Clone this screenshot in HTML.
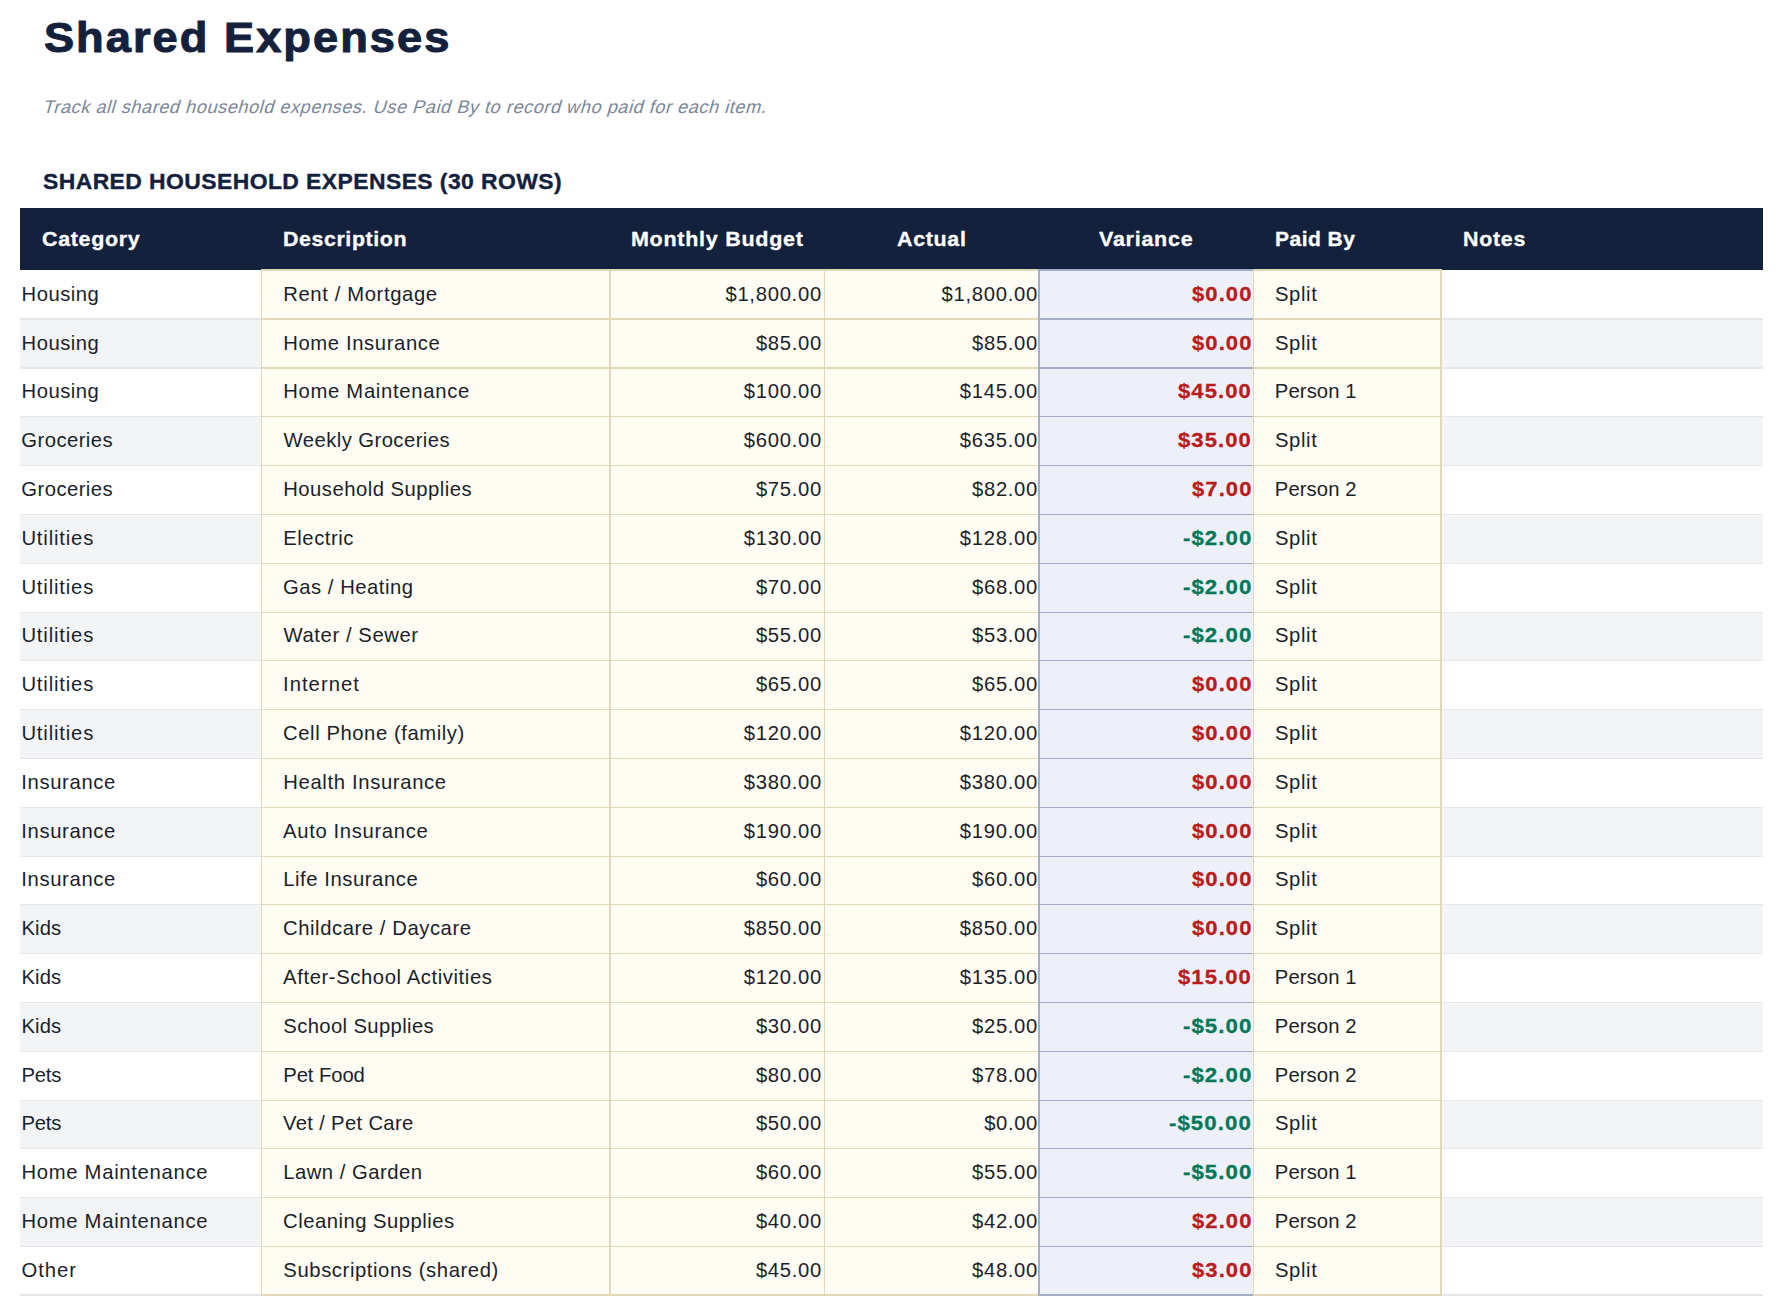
<!DOCTYPE html>
<html><head><meta charset="utf-8"><title>Shared Expenses</title>
<style>
html,body{margin:0;padding:0;background:#ffffff;}
body{width:1783px;height:1316px;position:relative;overflow:hidden;font-family:"Liberation Sans", sans-serif;}
body div{position:absolute;}
.t{white-space:nowrap;}
</style></head><body>
<div style="left:20px;top:208px;width:1743px;height:62px;background:#14213d"></div><div style="left:20px;top:270px;width:241px;height:49px;background:#ffffff"></div><div style="left:1441px;top:270px;width:322px;height:49px;background:#ffffff"></div><div style="left:261px;top:270px;width:349px;height:49px;background:#fffcf3"></div><div style="left:610px;top:270px;width:214px;height:49px;background:#fffcf3"></div><div style="left:824px;top:270px;width:215px;height:49px;background:#fffcf3"></div><div style="left:1253px;top:270px;width:188px;height:49px;background:#fffcf3"></div><div style="left:1039px;top:270px;width:214px;height:49px;background:#edf0f8"></div><div style="left:20px;top:319px;width:241px;height:49px;background:#f3f4f6"></div><div style="left:1441px;top:319px;width:322px;height:49px;background:#f3f4f6"></div><div style="left:261px;top:319px;width:349px;height:49px;background:#fffcf3"></div><div style="left:610px;top:319px;width:214px;height:49px;background:#fffcf3"></div><div style="left:824px;top:319px;width:215px;height:49px;background:#fffcf3"></div><div style="left:1253px;top:319px;width:188px;height:49px;background:#fffcf3"></div><div style="left:1039px;top:319px;width:214px;height:49px;background:#edf0f8"></div><div style="left:20px;top:368px;width:241px;height:48px;background:#ffffff"></div><div style="left:1441px;top:368px;width:322px;height:48px;background:#ffffff"></div><div style="left:261px;top:368px;width:349px;height:48px;background:#fffcf3"></div><div style="left:610px;top:368px;width:214px;height:48px;background:#fffcf3"></div><div style="left:824px;top:368px;width:215px;height:48px;background:#fffcf3"></div><div style="left:1253px;top:368px;width:188px;height:48px;background:#fffcf3"></div><div style="left:1039px;top:368px;width:214px;height:48px;background:#edf0f8"></div><div style="left:20px;top:416px;width:241px;height:49px;background:#f3f4f6"></div><div style="left:1441px;top:416px;width:322px;height:49px;background:#f3f4f6"></div><div style="left:261px;top:416px;width:349px;height:49px;background:#fffcf3"></div><div style="left:610px;top:416px;width:214px;height:49px;background:#fffcf3"></div><div style="left:824px;top:416px;width:215px;height:49px;background:#fffcf3"></div><div style="left:1253px;top:416px;width:188px;height:49px;background:#fffcf3"></div><div style="left:1039px;top:416px;width:214px;height:49px;background:#edf0f8"></div><div style="left:20px;top:465px;width:241px;height:49px;background:#ffffff"></div><div style="left:1441px;top:465px;width:322px;height:49px;background:#ffffff"></div><div style="left:261px;top:465px;width:349px;height:49px;background:#fffcf3"></div><div style="left:610px;top:465px;width:214px;height:49px;background:#fffcf3"></div><div style="left:824px;top:465px;width:215px;height:49px;background:#fffcf3"></div><div style="left:1253px;top:465px;width:188px;height:49px;background:#fffcf3"></div><div style="left:1039px;top:465px;width:214px;height:49px;background:#edf0f8"></div><div style="left:20px;top:514px;width:241px;height:49px;background:#f3f4f6"></div><div style="left:1441px;top:514px;width:322px;height:49px;background:#f3f4f6"></div><div style="left:261px;top:514px;width:349px;height:49px;background:#fffcf3"></div><div style="left:610px;top:514px;width:214px;height:49px;background:#fffcf3"></div><div style="left:824px;top:514px;width:215px;height:49px;background:#fffcf3"></div><div style="left:1253px;top:514px;width:188px;height:49px;background:#fffcf3"></div><div style="left:1039px;top:514px;width:214px;height:49px;background:#edf0f8"></div><div style="left:20px;top:563px;width:241px;height:49px;background:#ffffff"></div><div style="left:1441px;top:563px;width:322px;height:49px;background:#ffffff"></div><div style="left:261px;top:563px;width:349px;height:49px;background:#fffcf3"></div><div style="left:610px;top:563px;width:214px;height:49px;background:#fffcf3"></div><div style="left:824px;top:563px;width:215px;height:49px;background:#fffcf3"></div><div style="left:1253px;top:563px;width:188px;height:49px;background:#fffcf3"></div><div style="left:1039px;top:563px;width:214px;height:49px;background:#edf0f8"></div><div style="left:20px;top:612px;width:241px;height:48px;background:#f3f4f6"></div><div style="left:1441px;top:612px;width:322px;height:48px;background:#f3f4f6"></div><div style="left:261px;top:612px;width:349px;height:48px;background:#fffcf3"></div><div style="left:610px;top:612px;width:214px;height:48px;background:#fffcf3"></div><div style="left:824px;top:612px;width:215px;height:48px;background:#fffcf3"></div><div style="left:1253px;top:612px;width:188px;height:48px;background:#fffcf3"></div><div style="left:1039px;top:612px;width:214px;height:48px;background:#edf0f8"></div><div style="left:20px;top:660px;width:241px;height:49px;background:#ffffff"></div><div style="left:1441px;top:660px;width:322px;height:49px;background:#ffffff"></div><div style="left:261px;top:660px;width:349px;height:49px;background:#fffcf3"></div><div style="left:610px;top:660px;width:214px;height:49px;background:#fffcf3"></div><div style="left:824px;top:660px;width:215px;height:49px;background:#fffcf3"></div><div style="left:1253px;top:660px;width:188px;height:49px;background:#fffcf3"></div><div style="left:1039px;top:660px;width:214px;height:49px;background:#edf0f8"></div><div style="left:20px;top:709px;width:241px;height:49px;background:#f3f4f6"></div><div style="left:1441px;top:709px;width:322px;height:49px;background:#f3f4f6"></div><div style="left:261px;top:709px;width:349px;height:49px;background:#fffcf3"></div><div style="left:610px;top:709px;width:214px;height:49px;background:#fffcf3"></div><div style="left:824px;top:709px;width:215px;height:49px;background:#fffcf3"></div><div style="left:1253px;top:709px;width:188px;height:49px;background:#fffcf3"></div><div style="left:1039px;top:709px;width:214px;height:49px;background:#edf0f8"></div><div style="left:20px;top:758px;width:241px;height:49px;background:#ffffff"></div><div style="left:1441px;top:758px;width:322px;height:49px;background:#ffffff"></div><div style="left:261px;top:758px;width:349px;height:49px;background:#fffcf3"></div><div style="left:610px;top:758px;width:214px;height:49px;background:#fffcf3"></div><div style="left:824px;top:758px;width:215px;height:49px;background:#fffcf3"></div><div style="left:1253px;top:758px;width:188px;height:49px;background:#fffcf3"></div><div style="left:1039px;top:758px;width:214px;height:49px;background:#edf0f8"></div><div style="left:20px;top:807px;width:241px;height:49px;background:#f3f4f6"></div><div style="left:1441px;top:807px;width:322px;height:49px;background:#f3f4f6"></div><div style="left:261px;top:807px;width:349px;height:49px;background:#fffcf3"></div><div style="left:610px;top:807px;width:214px;height:49px;background:#fffcf3"></div><div style="left:824px;top:807px;width:215px;height:49px;background:#fffcf3"></div><div style="left:1253px;top:807px;width:188px;height:49px;background:#fffcf3"></div><div style="left:1039px;top:807px;width:214px;height:49px;background:#edf0f8"></div><div style="left:20px;top:856px;width:241px;height:48px;background:#ffffff"></div><div style="left:1441px;top:856px;width:322px;height:48px;background:#ffffff"></div><div style="left:261px;top:856px;width:349px;height:48px;background:#fffcf3"></div><div style="left:610px;top:856px;width:214px;height:48px;background:#fffcf3"></div><div style="left:824px;top:856px;width:215px;height:48px;background:#fffcf3"></div><div style="left:1253px;top:856px;width:188px;height:48px;background:#fffcf3"></div><div style="left:1039px;top:856px;width:214px;height:48px;background:#edf0f8"></div><div style="left:20px;top:904px;width:241px;height:49px;background:#f3f4f6"></div><div style="left:1441px;top:904px;width:322px;height:49px;background:#f3f4f6"></div><div style="left:261px;top:904px;width:349px;height:49px;background:#fffcf3"></div><div style="left:610px;top:904px;width:214px;height:49px;background:#fffcf3"></div><div style="left:824px;top:904px;width:215px;height:49px;background:#fffcf3"></div><div style="left:1253px;top:904px;width:188px;height:49px;background:#fffcf3"></div><div style="left:1039px;top:904px;width:214px;height:49px;background:#edf0f8"></div><div style="left:20px;top:953px;width:241px;height:49px;background:#ffffff"></div><div style="left:1441px;top:953px;width:322px;height:49px;background:#ffffff"></div><div style="left:261px;top:953px;width:349px;height:49px;background:#fffcf3"></div><div style="left:610px;top:953px;width:214px;height:49px;background:#fffcf3"></div><div style="left:824px;top:953px;width:215px;height:49px;background:#fffcf3"></div><div style="left:1253px;top:953px;width:188px;height:49px;background:#fffcf3"></div><div style="left:1039px;top:953px;width:214px;height:49px;background:#edf0f8"></div><div style="left:20px;top:1002px;width:241px;height:49px;background:#f3f4f6"></div><div style="left:1441px;top:1002px;width:322px;height:49px;background:#f3f4f6"></div><div style="left:261px;top:1002px;width:349px;height:49px;background:#fffcf3"></div><div style="left:610px;top:1002px;width:214px;height:49px;background:#fffcf3"></div><div style="left:824px;top:1002px;width:215px;height:49px;background:#fffcf3"></div><div style="left:1253px;top:1002px;width:188px;height:49px;background:#fffcf3"></div><div style="left:1039px;top:1002px;width:214px;height:49px;background:#edf0f8"></div><div style="left:20px;top:1051px;width:241px;height:49px;background:#ffffff"></div><div style="left:1441px;top:1051px;width:322px;height:49px;background:#ffffff"></div><div style="left:261px;top:1051px;width:349px;height:49px;background:#fffcf3"></div><div style="left:610px;top:1051px;width:214px;height:49px;background:#fffcf3"></div><div style="left:824px;top:1051px;width:215px;height:49px;background:#fffcf3"></div><div style="left:1253px;top:1051px;width:188px;height:49px;background:#fffcf3"></div><div style="left:1039px;top:1051px;width:214px;height:49px;background:#edf0f8"></div><div style="left:20px;top:1100px;width:241px;height:48px;background:#f3f4f6"></div><div style="left:1441px;top:1100px;width:322px;height:48px;background:#f3f4f6"></div><div style="left:261px;top:1100px;width:349px;height:48px;background:#fffcf3"></div><div style="left:610px;top:1100px;width:214px;height:48px;background:#fffcf3"></div><div style="left:824px;top:1100px;width:215px;height:48px;background:#fffcf3"></div><div style="left:1253px;top:1100px;width:188px;height:48px;background:#fffcf3"></div><div style="left:1039px;top:1100px;width:214px;height:48px;background:#edf0f8"></div><div style="left:20px;top:1148px;width:241px;height:49px;background:#ffffff"></div><div style="left:1441px;top:1148px;width:322px;height:49px;background:#ffffff"></div><div style="left:261px;top:1148px;width:349px;height:49px;background:#fffcf3"></div><div style="left:610px;top:1148px;width:214px;height:49px;background:#fffcf3"></div><div style="left:824px;top:1148px;width:215px;height:49px;background:#fffcf3"></div><div style="left:1253px;top:1148px;width:188px;height:49px;background:#fffcf3"></div><div style="left:1039px;top:1148px;width:214px;height:49px;background:#edf0f8"></div><div style="left:20px;top:1197px;width:241px;height:49px;background:#f3f4f6"></div><div style="left:1441px;top:1197px;width:322px;height:49px;background:#f3f4f6"></div><div style="left:261px;top:1197px;width:349px;height:49px;background:#fffcf3"></div><div style="left:610px;top:1197px;width:214px;height:49px;background:#fffcf3"></div><div style="left:824px;top:1197px;width:215px;height:49px;background:#fffcf3"></div><div style="left:1253px;top:1197px;width:188px;height:49px;background:#fffcf3"></div><div style="left:1039px;top:1197px;width:214px;height:49px;background:#edf0f8"></div><div style="left:20px;top:1246px;width:241px;height:49px;background:#ffffff"></div><div style="left:1441px;top:1246px;width:322px;height:49px;background:#ffffff"></div><div style="left:261px;top:1246px;width:349px;height:49px;background:#fffcf3"></div><div style="left:610px;top:1246px;width:214px;height:49px;background:#fffcf3"></div><div style="left:824px;top:1246px;width:215px;height:49px;background:#fffcf3"></div><div style="left:1253px;top:1246px;width:188px;height:49px;background:#fffcf3"></div><div style="left:1039px;top:1246px;width:214px;height:49px;background:#edf0f8"></div>
<div style="left:20px;top:318px;width:241px;height:2px;background:#e5e7eb"></div><div style="left:1441px;top:318px;width:322px;height:2px;background:#e5e7eb"></div><div style="left:20px;top:367px;width:241px;height:2px;background:#e5e7eb"></div><div style="left:1441px;top:367px;width:322px;height:2px;background:#e5e7eb"></div><div style="left:20px;top:416px;width:241px;height:1px;background:#e5e7eb"></div><div style="left:1441px;top:416px;width:322px;height:1px;background:#e5e7eb"></div><div style="left:20px;top:465px;width:241px;height:1px;background:#e5e7eb"></div><div style="left:1441px;top:465px;width:322px;height:1px;background:#e5e7eb"></div><div style="left:20px;top:514px;width:241px;height:1px;background:#e5e7eb"></div><div style="left:1441px;top:514px;width:322px;height:1px;background:#e5e7eb"></div><div style="left:20px;top:563px;width:241px;height:1px;background:#e5e7eb"></div><div style="left:1441px;top:563px;width:322px;height:1px;background:#e5e7eb"></div><div style="left:20px;top:612px;width:241px;height:1px;background:#e5e7eb"></div><div style="left:1441px;top:612px;width:322px;height:1px;background:#e5e7eb"></div><div style="left:20px;top:660px;width:241px;height:1px;background:#e5e7eb"></div><div style="left:1441px;top:660px;width:322px;height:1px;background:#e5e7eb"></div><div style="left:20px;top:709px;width:241px;height:1px;background:#e5e7eb"></div><div style="left:1441px;top:709px;width:322px;height:1px;background:#e5e7eb"></div><div style="left:20px;top:758px;width:241px;height:1px;background:#e5e7eb"></div><div style="left:1441px;top:758px;width:322px;height:1px;background:#e5e7eb"></div><div style="left:20px;top:807px;width:241px;height:1px;background:#e5e7eb"></div><div style="left:1441px;top:807px;width:322px;height:1px;background:#e5e7eb"></div><div style="left:20px;top:856px;width:241px;height:1px;background:#e5e7eb"></div><div style="left:1441px;top:856px;width:322px;height:1px;background:#e5e7eb"></div><div style="left:20px;top:904px;width:241px;height:1px;background:#e5e7eb"></div><div style="left:1441px;top:904px;width:322px;height:1px;background:#e5e7eb"></div><div style="left:20px;top:953px;width:241px;height:1px;background:#e5e7eb"></div><div style="left:1441px;top:953px;width:322px;height:1px;background:#e5e7eb"></div><div style="left:20px;top:1002px;width:241px;height:1px;background:#e5e7eb"></div><div style="left:1441px;top:1002px;width:322px;height:1px;background:#e5e7eb"></div><div style="left:20px;top:1051px;width:241px;height:1px;background:#e5e7eb"></div><div style="left:1441px;top:1051px;width:322px;height:1px;background:#e5e7eb"></div><div style="left:20px;top:1100px;width:241px;height:1px;background:#e5e7eb"></div><div style="left:1441px;top:1100px;width:322px;height:1px;background:#e5e7eb"></div><div style="left:20px;top:1148px;width:241px;height:1px;background:#e5e7eb"></div><div style="left:1441px;top:1148px;width:322px;height:1px;background:#e5e7eb"></div><div style="left:20px;top:1197px;width:241px;height:1px;background:#e5e7eb"></div><div style="left:1441px;top:1197px;width:322px;height:1px;background:#e5e7eb"></div><div style="left:20px;top:1246px;width:241px;height:1px;background:#e5e7eb"></div><div style="left:1441px;top:1246px;width:322px;height:1px;background:#e5e7eb"></div><div style="left:20px;top:1294px;width:241px;height:2px;background:#e5e7eb"></div><div style="left:1441px;top:1294px;width:322px;height:2px;background:#e5e7eb"></div><div style="left:261px;top:269px;width:349px;height:2px;background:#e2d8b8"></div><div style="left:610px;top:269px;width:429px;height:2px;background:#e2d8b8"></div><div style="left:1253px;top:269px;width:189px;height:2px;background:#e2d8b8"></div><div style="left:1039px;top:269px;width:214px;height:2px;background:#a3adc9"></div><div style="left:261px;top:318px;width:349px;height:2px;background:#e2d8b8"></div><div style="left:610px;top:318px;width:429px;height:2px;background:#e2d8b8"></div><div style="left:1253px;top:318px;width:189px;height:2px;background:#e2d8b8"></div><div style="left:1039px;top:318px;width:214px;height:2px;background:#a3adc9"></div><div style="left:261px;top:367px;width:349px;height:2px;background:#e2d8b8"></div><div style="left:610px;top:367px;width:429px;height:2px;background:#e2d8b8"></div><div style="left:1253px;top:367px;width:189px;height:2px;background:#e2d8b8"></div><div style="left:1039px;top:367px;width:214px;height:2px;background:#a3adc9"></div><div style="left:261px;top:416px;width:349px;height:1px;background:#e2d8b8"></div><div style="left:610px;top:416px;width:429px;height:1px;background:#e2d8b8"></div><div style="left:1253px;top:416px;width:189px;height:1px;background:#e2d8b8"></div><div style="left:1039px;top:416px;width:214px;height:1px;background:#a3adc9"></div><div style="left:261px;top:465px;width:349px;height:1px;background:#e2d8b8"></div><div style="left:610px;top:465px;width:429px;height:1px;background:#e2d8b8"></div><div style="left:1253px;top:465px;width:189px;height:1px;background:#e2d8b8"></div><div style="left:1039px;top:465px;width:214px;height:1px;background:#a3adc9"></div><div style="left:261px;top:514px;width:349px;height:1px;background:#e2d8b8"></div><div style="left:610px;top:514px;width:429px;height:1px;background:#e2d8b8"></div><div style="left:1253px;top:514px;width:189px;height:1px;background:#e2d8b8"></div><div style="left:1039px;top:514px;width:214px;height:1px;background:#a3adc9"></div><div style="left:261px;top:563px;width:349px;height:1px;background:#e2d8b8"></div><div style="left:610px;top:563px;width:429px;height:1px;background:#e2d8b8"></div><div style="left:1253px;top:563px;width:189px;height:1px;background:#e2d8b8"></div><div style="left:1039px;top:563px;width:214px;height:1px;background:#a3adc9"></div><div style="left:261px;top:612px;width:349px;height:1px;background:#e2d8b8"></div><div style="left:610px;top:612px;width:429px;height:1px;background:#e2d8b8"></div><div style="left:1253px;top:612px;width:189px;height:1px;background:#e2d8b8"></div><div style="left:1039px;top:612px;width:214px;height:1px;background:#a3adc9"></div><div style="left:261px;top:660px;width:349px;height:1px;background:#e2d8b8"></div><div style="left:610px;top:660px;width:429px;height:1px;background:#e2d8b8"></div><div style="left:1253px;top:660px;width:189px;height:1px;background:#e2d8b8"></div><div style="left:1039px;top:660px;width:214px;height:1px;background:#a3adc9"></div><div style="left:261px;top:709px;width:349px;height:1px;background:#e2d8b8"></div><div style="left:610px;top:709px;width:429px;height:1px;background:#e2d8b8"></div><div style="left:1253px;top:709px;width:189px;height:1px;background:#e2d8b8"></div><div style="left:1039px;top:709px;width:214px;height:1px;background:#a3adc9"></div><div style="left:261px;top:758px;width:349px;height:1px;background:#e2d8b8"></div><div style="left:610px;top:758px;width:429px;height:1px;background:#e2d8b8"></div><div style="left:1253px;top:758px;width:189px;height:1px;background:#e2d8b8"></div><div style="left:1039px;top:758px;width:214px;height:1px;background:#a3adc9"></div><div style="left:261px;top:807px;width:349px;height:1px;background:#e2d8b8"></div><div style="left:610px;top:807px;width:429px;height:1px;background:#e2d8b8"></div><div style="left:1253px;top:807px;width:189px;height:1px;background:#e2d8b8"></div><div style="left:1039px;top:807px;width:214px;height:1px;background:#a3adc9"></div><div style="left:261px;top:856px;width:349px;height:1px;background:#e2d8b8"></div><div style="left:610px;top:856px;width:429px;height:1px;background:#e2d8b8"></div><div style="left:1253px;top:856px;width:189px;height:1px;background:#e2d8b8"></div><div style="left:1039px;top:856px;width:214px;height:1px;background:#a3adc9"></div><div style="left:261px;top:904px;width:349px;height:1px;background:#e2d8b8"></div><div style="left:610px;top:904px;width:429px;height:1px;background:#e2d8b8"></div><div style="left:1253px;top:904px;width:189px;height:1px;background:#e2d8b8"></div><div style="left:1039px;top:904px;width:214px;height:1px;background:#a3adc9"></div><div style="left:261px;top:953px;width:349px;height:1px;background:#e2d8b8"></div><div style="left:610px;top:953px;width:429px;height:1px;background:#e2d8b8"></div><div style="left:1253px;top:953px;width:189px;height:1px;background:#e2d8b8"></div><div style="left:1039px;top:953px;width:214px;height:1px;background:#a3adc9"></div><div style="left:261px;top:1002px;width:349px;height:1px;background:#e2d8b8"></div><div style="left:610px;top:1002px;width:429px;height:1px;background:#e2d8b8"></div><div style="left:1253px;top:1002px;width:189px;height:1px;background:#e2d8b8"></div><div style="left:1039px;top:1002px;width:214px;height:1px;background:#a3adc9"></div><div style="left:261px;top:1051px;width:349px;height:1px;background:#e2d8b8"></div><div style="left:610px;top:1051px;width:429px;height:1px;background:#e2d8b8"></div><div style="left:1253px;top:1051px;width:189px;height:1px;background:#e2d8b8"></div><div style="left:1039px;top:1051px;width:214px;height:1px;background:#a3adc9"></div><div style="left:261px;top:1100px;width:349px;height:1px;background:#e2d8b8"></div><div style="left:610px;top:1100px;width:429px;height:1px;background:#e2d8b8"></div><div style="left:1253px;top:1100px;width:189px;height:1px;background:#e2d8b8"></div><div style="left:1039px;top:1100px;width:214px;height:1px;background:#a3adc9"></div><div style="left:261px;top:1148px;width:349px;height:1px;background:#e2d8b8"></div><div style="left:610px;top:1148px;width:429px;height:1px;background:#e2d8b8"></div><div style="left:1253px;top:1148px;width:189px;height:1px;background:#e2d8b8"></div><div style="left:1039px;top:1148px;width:214px;height:1px;background:#a3adc9"></div><div style="left:261px;top:1197px;width:349px;height:1px;background:#e2d8b8"></div><div style="left:610px;top:1197px;width:429px;height:1px;background:#e2d8b8"></div><div style="left:1253px;top:1197px;width:189px;height:1px;background:#e2d8b8"></div><div style="left:1039px;top:1197px;width:214px;height:1px;background:#a3adc9"></div><div style="left:261px;top:1246px;width:349px;height:1px;background:#e2d8b8"></div><div style="left:610px;top:1246px;width:429px;height:1px;background:#e2d8b8"></div><div style="left:1253px;top:1246px;width:189px;height:1px;background:#e2d8b8"></div><div style="left:1039px;top:1246px;width:214px;height:1px;background:#a3adc9"></div><div style="left:261px;top:1294px;width:349px;height:2px;background:#e2d8b8"></div><div style="left:610px;top:1294px;width:429px;height:2px;background:#e2d8b8"></div><div style="left:1253px;top:1294px;width:189px;height:2px;background:#e2d8b8"></div><div style="left:1039px;top:1294px;width:214px;height:2px;background:#a3adc9"></div><div style="left:261px;top:269px;width:1px;height:1027px;background:#e2d8b8"></div><div style="left:609px;top:269px;width:2px;height:1027px;background:#e2d8b8"></div><div style="left:824px;top:269px;width:1px;height:1027px;background:#e2d8b8"></div><div style="left:1440px;top:269px;width:2px;height:1027px;background:#e2d8b8"></div><div style="left:1253px;top:269px;width:1px;height:1027px;background:#e2d8b8"></div><div style="left:1038px;top:269px;width:2px;height:1027px;background:#a3adc9"></div>
<div class="t" style="left:44.03px;top:17.16px;font-size:41.818px;line-height:41.818px;color:#14213d;font-weight:bold;-webkit-text-stroke:1.0px #14213d;transform:scaleX(1.0821);transform-origin:1.20px 35.54px;letter-spacing:1.873px;">Shared Expenses</div><div class="t" style="left:41.74px;top:97.90px;font-size:18.230px;line-height:18.230px;color:#7b8698;transform:skewX(-16deg);transform-origin:0.41px 15.50px;letter-spacing:0.512px;">Track all shared household expenses. Use Paid By to record who paid for each item.</div><div class="t" style="left:43.07px;top:171.26px;font-size:22.282px;line-height:22.282px;color:#14213d;font-weight:bold;-webkit-text-stroke:0.35px #14213d;transform:scaleX(1.0294);transform-origin:0.64px 18.94px;letter-spacing:0.410px;">SHARED HOUSEHOLD EXPENSES (30 ROWS)</div><div class="t" style="left:41.63px;top:228.68px;font-size:20.256px;line-height:20.256px;color:#ffffff;font-weight:bold;-webkit-text-stroke:0.3px #ffffff;transform:scaleX(1.0574);transform-origin:0.83px 17.22px;letter-spacing:0.673px;">Category</div><div class="t" style="left:283.41px;top:228.68px;font-size:20.256px;line-height:20.256px;color:#ffffff;font-weight:bold;-webkit-text-stroke:0.3px #ffffff;transform:scaleX(1.0554);transform-origin:1.36px 17.22px;letter-spacing:0.571px;">Description</div><div class="t" style="left:631.42px;top:228.68px;font-size:20.256px;line-height:20.256px;color:#ffffff;font-weight:bold;-webkit-text-stroke:0.3px #ffffff;transform:scaleX(1.0624);transform-origin:1.36px 17.22px;letter-spacing:0.684px;">Monthly Budget</div><div class="t" style="left:897.04px;top:228.68px;font-size:20.256px;line-height:20.256px;color:#ffffff;font-weight:bold;-webkit-text-stroke:0.3px #ffffff;transform:scaleX(1.0578);transform-origin:0.50px 17.22px;letter-spacing:0.656px;">Actual</div><div class="t" style="left:1099.31px;top:228.68px;font-size:20.256px;line-height:20.256px;color:#ffffff;font-weight:bold;-webkit-text-stroke:0.3px #ffffff;transform:scaleX(1.0623);transform-origin:0.14px 17.22px;letter-spacing:0.691px;">Variance</div><div class="t" style="left:1275.21px;top:228.68px;font-size:20.256px;line-height:20.256px;color:#ffffff;font-weight:bold;-webkit-text-stroke:0.3px #ffffff;transform:scaleX(1.0391);transform-origin:1.36px 17.22px;letter-spacing:0.457px;">Paid By</div><div class="t" style="left:1463.01px;top:228.68px;font-size:20.256px;line-height:20.256px;color:#ffffff;font-weight:bold;-webkit-text-stroke:0.3px #ffffff;transform:scaleX(1.0565);transform-origin:1.36px 17.22px;letter-spacing:0.723px;">Notes</div><div class="t" style="left:21.52px;top:283.78px;font-size:20.256px;line-height:20.256px;color:#1a1f2b;letter-spacing:0.507px;">Housing</div><div class="t" style="left:283.22px;top:283.78px;font-size:20.256px;line-height:20.256px;color:#1a1f2b;letter-spacing:0.622px;">Rent / Mortgage</div><div class="t" style="left:725.42px;top:283.78px;font-size:20.256px;line-height:20.256px;color:#1a1f2b;letter-spacing:0.713px;">$1,800.00</div><div class="t" style="left:941.52px;top:283.78px;font-size:20.256px;line-height:20.256px;color:#1a1f2b;letter-spacing:0.713px;">$1,800.00</div><div class="t" style="left:1191.63px;top:283.78px;font-size:20.256px;line-height:20.256px;color:#b91c1c;font-weight:bold;-webkit-text-stroke:0.3px #b91c1c;transform:scaleX(1.0877);transform-origin:0.27px 17.22px;letter-spacing:0.999px;">$0.00</div><div class="t" style="left:1274.95px;top:283.78px;font-size:20.256px;line-height:20.256px;color:#1a1f2b;letter-spacing:0.621px;">Split</div><div class="t" style="left:21.52px;top:332.58px;font-size:20.256px;line-height:20.256px;color:#1a1f2b;letter-spacing:0.507px;">Housing</div><div class="t" style="left:283.22px;top:332.58px;font-size:20.256px;line-height:20.256px;color:#1a1f2b;letter-spacing:0.614px;">Home Insurance</div><div class="t" style="left:755.94px;top:332.58px;font-size:20.256px;line-height:20.256px;color:#1a1f2b;letter-spacing:0.669px;">$85.00</div><div class="t" style="left:972.04px;top:332.58px;font-size:20.256px;line-height:20.256px;color:#1a1f2b;letter-spacing:0.669px;">$85.00</div><div class="t" style="left:1191.63px;top:332.58px;font-size:20.256px;line-height:20.256px;color:#b91c1c;font-weight:bold;-webkit-text-stroke:0.3px #b91c1c;transform:scaleX(1.0877);transform-origin:0.27px 17.22px;letter-spacing:0.999px;">$0.00</div><div class="t" style="left:1274.95px;top:332.58px;font-size:20.256px;line-height:20.256px;color:#1a1f2b;letter-spacing:0.621px;">Split</div><div class="t" style="left:21.52px;top:381.38px;font-size:20.256px;line-height:20.256px;color:#1a1f2b;letter-spacing:0.507px;">Housing</div><div class="t" style="left:283.22px;top:381.38px;font-size:20.256px;line-height:20.256px;color:#1a1f2b;letter-spacing:0.693px;">Home Maintenance</div><div class="t" style="left:743.72px;top:381.38px;font-size:20.256px;line-height:20.256px;color:#1a1f2b;letter-spacing:0.716px;">$100.00</div><div class="t" style="left:959.82px;top:381.38px;font-size:20.256px;line-height:20.256px;color:#1a1f2b;letter-spacing:0.716px;">$145.00</div><div class="t" style="left:1178.29px;top:381.38px;font-size:20.256px;line-height:20.256px;color:#b91c1c;font-weight:bold;-webkit-text-stroke:0.3px #b91c1c;transform:scaleX(1.0887);transform-origin:0.27px 17.22px;letter-spacing:0.991px;">$45.00</div><div class="t" style="left:1274.82px;top:381.38px;font-size:20.256px;line-height:20.256px;color:#1a1f2b;letter-spacing:0.104px;">Person 1</div><div class="t" style="left:21.36px;top:430.18px;font-size:20.256px;line-height:20.256px;color:#1a1f2b;letter-spacing:0.426px;">Groceries</div><div class="t" style="left:283.55px;top:430.18px;font-size:20.256px;line-height:20.256px;color:#1a1f2b;letter-spacing:0.442px;">Weekly Groceries</div><div class="t" style="left:743.72px;top:430.18px;font-size:20.256px;line-height:20.256px;color:#1a1f2b;letter-spacing:0.716px;">$600.00</div><div class="t" style="left:959.82px;top:430.18px;font-size:20.256px;line-height:20.256px;color:#1a1f2b;letter-spacing:0.716px;">$635.00</div><div class="t" style="left:1178.29px;top:430.18px;font-size:20.256px;line-height:20.256px;color:#b91c1c;font-weight:bold;-webkit-text-stroke:0.3px #b91c1c;transform:scaleX(1.0887);transform-origin:0.27px 17.22px;letter-spacing:0.991px;">$35.00</div><div class="t" style="left:1274.95px;top:430.18px;font-size:20.256px;line-height:20.256px;color:#1a1f2b;letter-spacing:0.621px;">Split</div><div class="t" style="left:21.36px;top:478.98px;font-size:20.256px;line-height:20.256px;color:#1a1f2b;letter-spacing:0.426px;">Groceries</div><div class="t" style="left:283.22px;top:478.98px;font-size:20.256px;line-height:20.256px;color:#1a1f2b;letter-spacing:0.486px;">Household Supplies</div><div class="t" style="left:755.94px;top:478.98px;font-size:20.256px;line-height:20.256px;color:#1a1f2b;letter-spacing:0.669px;">$75.00</div><div class="t" style="left:972.04px;top:478.98px;font-size:20.256px;line-height:20.256px;color:#1a1f2b;letter-spacing:0.669px;">$82.00</div><div class="t" style="left:1191.63px;top:478.98px;font-size:20.256px;line-height:20.256px;color:#b91c1c;font-weight:bold;-webkit-text-stroke:0.3px #b91c1c;transform:scaleX(1.0877);transform-origin:0.27px 17.22px;letter-spacing:0.999px;">$7.00</div><div class="t" style="left:1274.82px;top:478.98px;font-size:20.256px;line-height:20.256px;color:#1a1f2b;letter-spacing:0.087px;">Person 2</div><div class="t" style="left:21.41px;top:527.78px;font-size:20.256px;line-height:20.256px;color:#1a1f2b;letter-spacing:0.830px;">Utilities</div><div class="t" style="left:283.22px;top:527.78px;font-size:20.256px;line-height:20.256px;color:#1a1f2b;letter-spacing:0.548px;">Electric</div><div class="t" style="left:743.72px;top:527.78px;font-size:20.256px;line-height:20.256px;color:#1a1f2b;letter-spacing:0.716px;">$130.00</div><div class="t" style="left:959.82px;top:527.78px;font-size:20.256px;line-height:20.256px;color:#1a1f2b;letter-spacing:0.716px;">$128.00</div><div class="t" style="left:1182.69px;top:527.78px;font-size:20.256px;line-height:20.256px;color:#047857;font-weight:bold;-webkit-text-stroke:0.3px #047857;transform:scaleX(1.0976);transform-origin:0.79px 17.22px;letter-spacing:0.993px;">-$2.00</div><div class="t" style="left:1274.95px;top:527.78px;font-size:20.256px;line-height:20.256px;color:#1a1f2b;letter-spacing:0.621px;">Split</div><div class="t" style="left:21.41px;top:576.58px;font-size:20.256px;line-height:20.256px;color:#1a1f2b;letter-spacing:0.830px;">Utilities</div><div class="t" style="left:283.06px;top:576.58px;font-size:20.256px;line-height:20.256px;color:#1a1f2b;letter-spacing:0.513px;">Gas / Heating</div><div class="t" style="left:755.94px;top:576.58px;font-size:20.256px;line-height:20.256px;color:#1a1f2b;letter-spacing:0.669px;">$70.00</div><div class="t" style="left:972.04px;top:576.58px;font-size:20.256px;line-height:20.256px;color:#1a1f2b;letter-spacing:0.669px;">$68.00</div><div class="t" style="left:1182.69px;top:576.58px;font-size:20.256px;line-height:20.256px;color:#047857;font-weight:bold;-webkit-text-stroke:0.3px #047857;transform:scaleX(1.0976);transform-origin:0.79px 17.22px;letter-spacing:0.993px;">-$2.00</div><div class="t" style="left:1274.95px;top:576.58px;font-size:20.256px;line-height:20.256px;color:#1a1f2b;letter-spacing:0.621px;">Split</div><div class="t" style="left:21.41px;top:625.38px;font-size:20.256px;line-height:20.256px;color:#1a1f2b;letter-spacing:0.830px;">Utilities</div><div class="t" style="left:283.55px;top:625.38px;font-size:20.256px;line-height:20.256px;color:#1a1f2b;letter-spacing:0.584px;">Water / Sewer</div><div class="t" style="left:755.94px;top:625.38px;font-size:20.256px;line-height:20.256px;color:#1a1f2b;letter-spacing:0.669px;">$55.00</div><div class="t" style="left:972.04px;top:625.38px;font-size:20.256px;line-height:20.256px;color:#1a1f2b;letter-spacing:0.669px;">$53.00</div><div class="t" style="left:1182.69px;top:625.38px;font-size:20.256px;line-height:20.256px;color:#047857;font-weight:bold;-webkit-text-stroke:0.3px #047857;transform:scaleX(1.0976);transform-origin:0.79px 17.22px;letter-spacing:0.993px;">-$2.00</div><div class="t" style="left:1274.95px;top:625.38px;font-size:20.256px;line-height:20.256px;color:#1a1f2b;letter-spacing:0.621px;">Split</div><div class="t" style="left:21.41px;top:674.18px;font-size:20.256px;line-height:20.256px;color:#1a1f2b;letter-spacing:0.830px;">Utilities</div><div class="t" style="left:283.02px;top:674.18px;font-size:20.256px;line-height:20.256px;color:#1a1f2b;letter-spacing:1.029px;">Internet</div><div class="t" style="left:755.94px;top:674.18px;font-size:20.256px;line-height:20.256px;color:#1a1f2b;letter-spacing:0.669px;">$65.00</div><div class="t" style="left:972.04px;top:674.18px;font-size:20.256px;line-height:20.256px;color:#1a1f2b;letter-spacing:0.669px;">$65.00</div><div class="t" style="left:1191.63px;top:674.18px;font-size:20.256px;line-height:20.256px;color:#b91c1c;font-weight:bold;-webkit-text-stroke:0.3px #b91c1c;transform:scaleX(1.0877);transform-origin:0.27px 17.22px;letter-spacing:0.999px;">$0.00</div><div class="t" style="left:1274.95px;top:674.18px;font-size:20.256px;line-height:20.256px;color:#1a1f2b;letter-spacing:0.621px;">Split</div><div class="t" style="left:21.41px;top:722.98px;font-size:20.256px;line-height:20.256px;color:#1a1f2b;letter-spacing:0.830px;">Utilities</div><div class="t" style="left:283.05px;top:722.98px;font-size:20.256px;line-height:20.256px;color:#1a1f2b;letter-spacing:0.567px;">Cell Phone (family)</div><div class="t" style="left:743.72px;top:722.98px;font-size:20.256px;line-height:20.256px;color:#1a1f2b;letter-spacing:0.716px;">$120.00</div><div class="t" style="left:959.82px;top:722.98px;font-size:20.256px;line-height:20.256px;color:#1a1f2b;letter-spacing:0.716px;">$120.00</div><div class="t" style="left:1191.63px;top:722.98px;font-size:20.256px;line-height:20.256px;color:#b91c1c;font-weight:bold;-webkit-text-stroke:0.3px #b91c1c;transform:scaleX(1.0877);transform-origin:0.27px 17.22px;letter-spacing:0.999px;">$0.00</div><div class="t" style="left:1274.95px;top:722.98px;font-size:20.256px;line-height:20.256px;color:#1a1f2b;letter-spacing:0.621px;">Split</div><div class="t" style="left:21.32px;top:771.78px;font-size:20.256px;line-height:20.256px;color:#1a1f2b;letter-spacing:0.633px;">Insurance</div><div class="t" style="left:283.22px;top:771.78px;font-size:20.256px;line-height:20.256px;color:#1a1f2b;letter-spacing:0.654px;">Health Insurance</div><div class="t" style="left:743.72px;top:771.78px;font-size:20.256px;line-height:20.256px;color:#1a1f2b;letter-spacing:0.716px;">$380.00</div><div class="t" style="left:959.82px;top:771.78px;font-size:20.256px;line-height:20.256px;color:#1a1f2b;letter-spacing:0.716px;">$380.00</div><div class="t" style="left:1191.63px;top:771.78px;font-size:20.256px;line-height:20.256px;color:#b91c1c;font-weight:bold;-webkit-text-stroke:0.3px #b91c1c;transform:scaleX(1.0877);transform-origin:0.27px 17.22px;letter-spacing:0.999px;">$0.00</div><div class="t" style="left:1274.95px;top:771.78px;font-size:20.256px;line-height:20.256px;color:#1a1f2b;letter-spacing:0.621px;">Split</div><div class="t" style="left:21.32px;top:820.58px;font-size:20.256px;line-height:20.256px;color:#1a1f2b;letter-spacing:0.633px;">Insurance</div><div class="t" style="left:283.11px;top:820.58px;font-size:20.256px;line-height:20.256px;color:#1a1f2b;letter-spacing:0.642px;">Auto Insurance</div><div class="t" style="left:743.72px;top:820.58px;font-size:20.256px;line-height:20.256px;color:#1a1f2b;letter-spacing:0.716px;">$190.00</div><div class="t" style="left:959.82px;top:820.58px;font-size:20.256px;line-height:20.256px;color:#1a1f2b;letter-spacing:0.716px;">$190.00</div><div class="t" style="left:1191.63px;top:820.58px;font-size:20.256px;line-height:20.256px;color:#b91c1c;font-weight:bold;-webkit-text-stroke:0.3px #b91c1c;transform:scaleX(1.0877);transform-origin:0.27px 17.22px;letter-spacing:0.999px;">$0.00</div><div class="t" style="left:1274.95px;top:820.58px;font-size:20.256px;line-height:20.256px;color:#1a1f2b;letter-spacing:0.621px;">Split</div><div class="t" style="left:21.32px;top:869.38px;font-size:20.256px;line-height:20.256px;color:#1a1f2b;letter-spacing:0.633px;">Insurance</div><div class="t" style="left:283.22px;top:869.38px;font-size:20.256px;line-height:20.256px;color:#1a1f2b;letter-spacing:0.559px;">Life Insurance</div><div class="t" style="left:755.94px;top:869.38px;font-size:20.256px;line-height:20.256px;color:#1a1f2b;letter-spacing:0.669px;">$60.00</div><div class="t" style="left:972.04px;top:869.38px;font-size:20.256px;line-height:20.256px;color:#1a1f2b;letter-spacing:0.669px;">$60.00</div><div class="t" style="left:1191.63px;top:869.38px;font-size:20.256px;line-height:20.256px;color:#b91c1c;font-weight:bold;-webkit-text-stroke:0.3px #b91c1c;transform:scaleX(1.0877);transform-origin:0.27px 17.22px;letter-spacing:0.999px;">$0.00</div><div class="t" style="left:1274.95px;top:869.38px;font-size:20.256px;line-height:20.256px;color:#1a1f2b;letter-spacing:0.621px;">Split</div><div class="t" style="left:21.52px;top:918.18px;font-size:20.256px;line-height:20.256px;color:#1a1f2b;letter-spacing:0.086px;">Kids</div><div class="t" style="left:283.05px;top:918.18px;font-size:20.256px;line-height:20.256px;color:#1a1f2b;letter-spacing:0.562px;">Childcare / Daycare</div><div class="t" style="left:743.72px;top:918.18px;font-size:20.256px;line-height:20.256px;color:#1a1f2b;letter-spacing:0.716px;">$850.00</div><div class="t" style="left:959.82px;top:918.18px;font-size:20.256px;line-height:20.256px;color:#1a1f2b;letter-spacing:0.716px;">$850.00</div><div class="t" style="left:1191.63px;top:918.18px;font-size:20.256px;line-height:20.256px;color:#b91c1c;font-weight:bold;-webkit-text-stroke:0.3px #b91c1c;transform:scaleX(1.0877);transform-origin:0.27px 17.22px;letter-spacing:0.999px;">$0.00</div><div class="t" style="left:1274.95px;top:918.18px;font-size:20.256px;line-height:20.256px;color:#1a1f2b;letter-spacing:0.621px;">Split</div><div class="t" style="left:21.52px;top:966.98px;font-size:20.256px;line-height:20.256px;color:#1a1f2b;letter-spacing:0.086px;">Kids</div><div class="t" style="left:283.11px;top:966.98px;font-size:20.256px;line-height:20.256px;color:#1a1f2b;letter-spacing:0.589px;">After-School Activities</div><div class="t" style="left:743.72px;top:966.98px;font-size:20.256px;line-height:20.256px;color:#1a1f2b;letter-spacing:0.716px;">$120.00</div><div class="t" style="left:959.82px;top:966.98px;font-size:20.256px;line-height:20.256px;color:#1a1f2b;letter-spacing:0.716px;">$135.00</div><div class="t" style="left:1178.29px;top:966.98px;font-size:20.256px;line-height:20.256px;color:#b91c1c;font-weight:bold;-webkit-text-stroke:0.3px #b91c1c;transform:scaleX(1.0887);transform-origin:0.27px 17.22px;letter-spacing:0.991px;">$15.00</div><div class="t" style="left:1274.82px;top:966.98px;font-size:20.256px;line-height:20.256px;color:#1a1f2b;letter-spacing:0.104px;">Person 1</div><div class="t" style="left:21.52px;top:1015.78px;font-size:20.256px;line-height:20.256px;color:#1a1f2b;letter-spacing:0.086px;">Kids</div><div class="t" style="left:283.35px;top:1015.78px;font-size:20.256px;line-height:20.256px;color:#1a1f2b;letter-spacing:0.370px;">School Supplies</div><div class="t" style="left:755.94px;top:1015.78px;font-size:20.256px;line-height:20.256px;color:#1a1f2b;letter-spacing:0.669px;">$30.00</div><div class="t" style="left:972.04px;top:1015.78px;font-size:20.256px;line-height:20.256px;color:#1a1f2b;letter-spacing:0.669px;">$25.00</div><div class="t" style="left:1182.69px;top:1015.78px;font-size:20.256px;line-height:20.256px;color:#047857;font-weight:bold;-webkit-text-stroke:0.3px #047857;transform:scaleX(1.0976);transform-origin:0.79px 17.22px;letter-spacing:0.993px;">-$5.00</div><div class="t" style="left:1274.82px;top:1015.78px;font-size:20.256px;line-height:20.256px;color:#1a1f2b;letter-spacing:0.087px;">Person 2</div><div class="t" style="left:21.52px;top:1064.58px;font-size:20.256px;line-height:20.256px;color:#1a1f2b;letter-spacing:-0.247px;">Pets</div><div class="t" style="left:283.22px;top:1064.58px;font-size:20.256px;line-height:20.256px;color:#1a1f2b;letter-spacing:-0.074px;">Pet Food</div><div class="t" style="left:755.94px;top:1064.58px;font-size:20.256px;line-height:20.256px;color:#1a1f2b;letter-spacing:0.669px;">$80.00</div><div class="t" style="left:972.04px;top:1064.58px;font-size:20.256px;line-height:20.256px;color:#1a1f2b;letter-spacing:0.669px;">$78.00</div><div class="t" style="left:1182.69px;top:1064.58px;font-size:20.256px;line-height:20.256px;color:#047857;font-weight:bold;-webkit-text-stroke:0.3px #047857;transform:scaleX(1.0976);transform-origin:0.79px 17.22px;letter-spacing:0.993px;">-$2.00</div><div class="t" style="left:1274.82px;top:1064.58px;font-size:20.256px;line-height:20.256px;color:#1a1f2b;letter-spacing:0.087px;">Person 2</div><div class="t" style="left:21.52px;top:1113.38px;font-size:20.256px;line-height:20.256px;color:#1a1f2b;letter-spacing:-0.247px;">Pets</div><div class="t" style="left:283.06px;top:1113.38px;font-size:20.256px;line-height:20.256px;color:#1a1f2b;letter-spacing:0.316px;">Vet / Pet Care</div><div class="t" style="left:755.94px;top:1113.38px;font-size:20.256px;line-height:20.256px;color:#1a1f2b;letter-spacing:0.669px;">$50.00</div><div class="t" style="left:984.24px;top:1113.38px;font-size:20.256px;line-height:20.256px;color:#1a1f2b;letter-spacing:0.598px;">$0.00</div><div class="t" style="left:1169.33px;top:1113.38px;font-size:20.256px;line-height:20.256px;color:#047857;font-weight:bold;-webkit-text-stroke:0.3px #047857;transform:scaleX(1.0969);transform-origin:0.79px 17.22px;letter-spacing:0.987px;">-$50.00</div><div class="t" style="left:1274.95px;top:1113.38px;font-size:20.256px;line-height:20.256px;color:#1a1f2b;letter-spacing:0.621px;">Split</div><div class="t" style="left:21.52px;top:1162.18px;font-size:20.256px;line-height:20.256px;color:#1a1f2b;letter-spacing:0.693px;">Home Maintenance</div><div class="t" style="left:283.22px;top:1162.18px;font-size:20.256px;line-height:20.256px;color:#1a1f2b;letter-spacing:0.493px;">Lawn / Garden</div><div class="t" style="left:755.94px;top:1162.18px;font-size:20.256px;line-height:20.256px;color:#1a1f2b;letter-spacing:0.669px;">$60.00</div><div class="t" style="left:972.04px;top:1162.18px;font-size:20.256px;line-height:20.256px;color:#1a1f2b;letter-spacing:0.669px;">$55.00</div><div class="t" style="left:1182.69px;top:1162.18px;font-size:20.256px;line-height:20.256px;color:#047857;font-weight:bold;-webkit-text-stroke:0.3px #047857;transform:scaleX(1.0976);transform-origin:0.79px 17.22px;letter-spacing:0.993px;">-$5.00</div><div class="t" style="left:1274.82px;top:1162.18px;font-size:20.256px;line-height:20.256px;color:#1a1f2b;letter-spacing:0.104px;">Person 1</div><div class="t" style="left:21.52px;top:1210.98px;font-size:20.256px;line-height:20.256px;color:#1a1f2b;letter-spacing:0.693px;">Home Maintenance</div><div class="t" style="left:283.05px;top:1210.98px;font-size:20.256px;line-height:20.256px;color:#1a1f2b;letter-spacing:0.493px;">Cleaning Supplies</div><div class="t" style="left:755.94px;top:1210.98px;font-size:20.256px;line-height:20.256px;color:#1a1f2b;letter-spacing:0.669px;">$40.00</div><div class="t" style="left:972.04px;top:1210.98px;font-size:20.256px;line-height:20.256px;color:#1a1f2b;letter-spacing:0.669px;">$42.00</div><div class="t" style="left:1191.63px;top:1210.98px;font-size:20.256px;line-height:20.256px;color:#b91c1c;font-weight:bold;-webkit-text-stroke:0.3px #b91c1c;transform:scaleX(1.0877);transform-origin:0.27px 17.22px;letter-spacing:0.999px;">$2.00</div><div class="t" style="left:1274.82px;top:1210.98px;font-size:20.256px;line-height:20.256px;color:#1a1f2b;letter-spacing:0.087px;">Person 2</div><div class="t" style="left:21.42px;top:1259.78px;font-size:20.256px;line-height:20.256px;color:#1a1f2b;letter-spacing:1.011px;">Other</div><div class="t" style="left:283.35px;top:1259.78px;font-size:20.256px;line-height:20.256px;color:#1a1f2b;letter-spacing:0.587px;">Subscriptions (shared)</div><div class="t" style="left:755.94px;top:1259.78px;font-size:20.256px;line-height:20.256px;color:#1a1f2b;letter-spacing:0.669px;">$45.00</div><div class="t" style="left:972.04px;top:1259.78px;font-size:20.256px;line-height:20.256px;color:#1a1f2b;letter-spacing:0.669px;">$48.00</div><div class="t" style="left:1191.63px;top:1259.78px;font-size:20.256px;line-height:20.256px;color:#b91c1c;font-weight:bold;-webkit-text-stroke:0.3px #b91c1c;transform:scaleX(1.0877);transform-origin:0.27px 17.22px;letter-spacing:0.999px;">$3.00</div><div class="t" style="left:1274.95px;top:1259.78px;font-size:20.256px;line-height:20.256px;color:#1a1f2b;letter-spacing:0.621px;">Split</div>
</body></html>
